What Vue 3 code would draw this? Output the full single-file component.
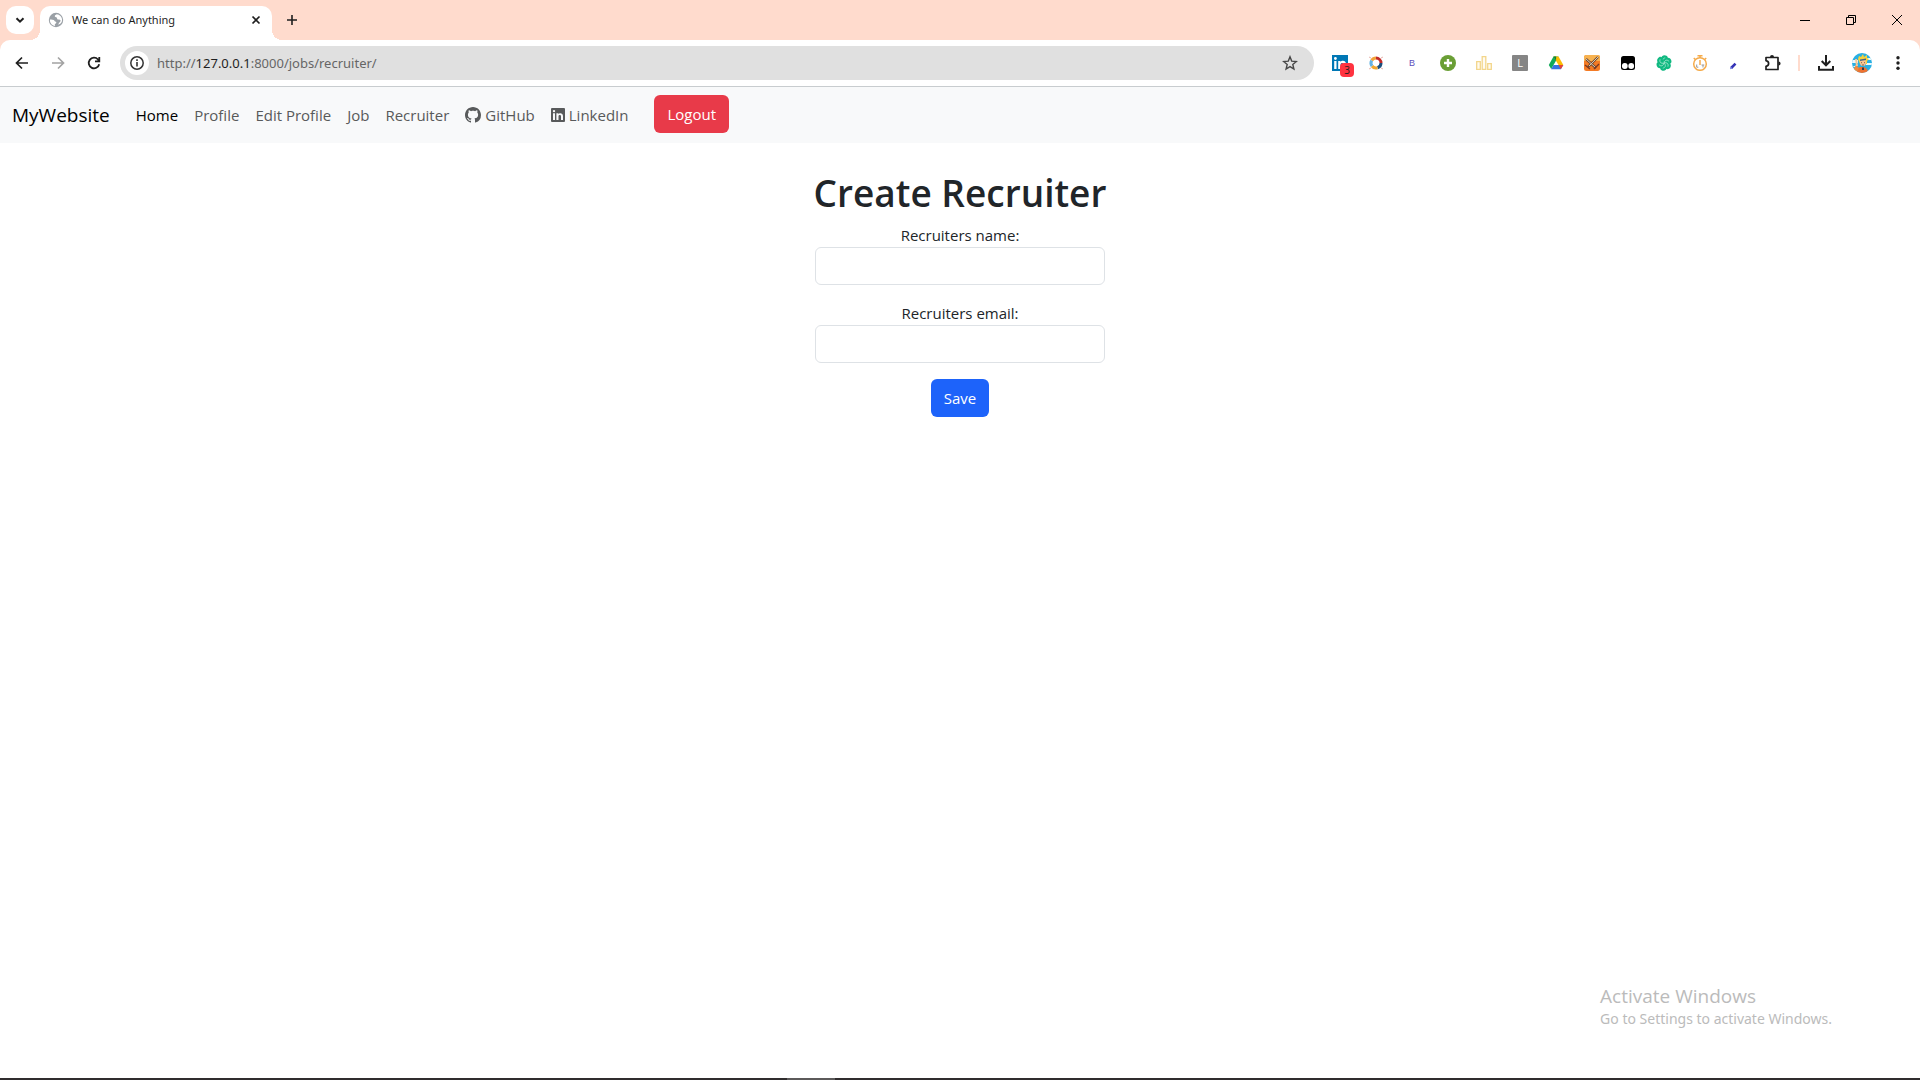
<script setup>
import { ref } from 'vue'

const url = ref('')
const name = ref('')
const email = ref('')
const links = ['Profile', 'Edit Profile', 'Job', 'Recruiter']
const petals = [0, 60, 120, 180, 240, 300]
</script>

<template>
  <div class="screen">
    <header class="browser">
      <div class="tabs">
        <button class="tab-search" aria-label="Search tabs">
          <svg width="12" height="12" viewBox="0 0 12 12"><path d="M2.5 4.2 6 7.7l3.5-3.5" fill="none" stroke="#1f1f1f" stroke-width="2" /></svg>
        </button>
        <div class="tab">
          <svg width="16" height="16" viewBox="0 0 16 16">
            <circle cx="8" cy="8" r="7.2" fill="#9aa0a6" />
            <path d="M8.7 2.2c-.9.7-1.9.9-1.9 2 0 .8 1.3.8 1.9 1.4.6.6.1 1.6 1 1.9 1 .3 2-.1 2.6.6.7.8-.1 1.9-.9 2.4-.7.5-.6 1.7-1.5 2.3 2.9-.7 4.2-2.9 4.2-4.9 0-3-2.3-5.4-5.4-5.7zM1.9 7.5c1.3-.2 2.8-.1 3.8.5.9.5.7 1.2 1.5 1.4.9.2 1.4.6 1 1.5-.4.8-1.4.7-1.4 1.7 0 .5.2 1 .4 1.4C4.1 13.5 1.7 11 1.9 7.5z" fill="#fff" />
          </svg>
          <span class="tab-title">We can do Anything</span>
          <button class="plain" aria-label="Close tab">
            <svg width="10" height="10" viewBox="0 0 10 10"><path d="m1.5 1.5 7 7m0-7-7 7" stroke="#1f1f1f" stroke-width="1.7" /></svg>
          </button>
        </div>
        <button class="plain new-tab" aria-label="New tab">
          <svg width="12" height="12" viewBox="0 0 12 12"><path d="M6 1v10M1 6h10" stroke="#1f1f1f" stroke-width="1.6" /></svg>
        </button>
        <div class="window-controls">
          <button class="plain" aria-label="Minimize">
            <svg width="10" height="10" viewBox="0 0 10 10"><path d="M0 5.5h10" stroke="#000" /></svg>
          </button>
          <button class="plain" aria-label="Restore">
            <svg width="10" height="10" viewBox="0 0 10 10"><path d="M.5 2.5h7v7h-7zM2.5 2.5v-2h7v7h-2" fill="none" stroke="#000" /></svg>
          </button>
          <button class="plain" aria-label="Close">
            <svg width="10" height="10" viewBox="0 0 10 10"><path d="m0 0 10 10M10 0 0 10" stroke="#000" /></svg>
          </button>
        </div>
      </div>

      <div class="toolbar">
        <div class="cells">
          <button class="cell" aria-label="Back">
            <svg width="16" height="16" viewBox="0 0 16 16"><path d="M14 8H3m5-5.5L2.5 8 8 13.5" fill="none" stroke="#1f1f1f" stroke-width="1.7" /></svg>
          </button>
          <button class="cell" aria-label="Forward">
            <svg width="16" height="16" viewBox="0 0 16 16"><path d="M2 8h11M8 2.5 13.5 8 8 13.5" fill="none" stroke="#a3a3a3" stroke-width="1.7" /></svg>
          </button>
          <button class="cell" aria-label="Reload">
            <svg width="16" height="16" viewBox="0 0 16 16"><path d="M13.2 9.2A5.3 5.3 0 1 1 12 4.5l1 1.2M13.3 2v4.3H9" fill="none" stroke="#1f1f1f" stroke-width="1.8" /></svg>
          </button>
        </div>
        <div class="omnibox">
          <button class="info" aria-label="View site information">
            <svg width="16" height="16" viewBox="0 0 16 16"><circle cx="8" cy="8" r="6.2" fill="none" stroke="#333" stroke-width="1.5" /><path d="M8 7v4.5M8 4.3v1.6" stroke="#333" stroke-width="1.6" /></svg>
          </button>
          <label class="address">
            <span>http://<b>127.0.0.1</b>:8000/jobs/recruiter/</span>
            <input v-model="url" aria-label="Address and search bar" />
          </label>
          <button class="plain" aria-label="Bookmark this tab">
            <svg width="16" height="16" viewBox="0 0 16 16"><path d="m8 1.8 1.7 4.3 4.7.4-3.6 3 1.1 4.5L8 11.6 4.1 14l1.1-4.5-3.6-3 4.7-.4z" fill="none" stroke="#474747" stroke-width="1.4" /></svg>
          </button>
        </div>
        <div class="cells">
          <button class="cell linkedin-ext" aria-label="LinkedIn extension">
            <svg width="16" height="16" viewBox="0 0 16 16"><path fill="#0077b5" d="M0 0h16v16H0z" /><path d="M2.2 6h2.3v8H2.2zM6.2 6h2.3v1.2C9.3 5.3 14 5 14 9v5h-2.4V9.5c0-2-3-2-3 0V14H6.2z" fill="#fff" /><circle cx="3.4" cy="3.5" r="1.4" fill="#fff" /></svg>
            <span class="badge">3</span>
          </button>
          <button class="cell" aria-label="Color ring">
            <svg width="16" height="16" viewBox="0 0 16 16" fill="none" stroke-width="3">
              <path d="M3.7 5.5A5 5 0 0 1 8 3" stroke="#f2a33a" /><path d="M8 3a5 5 0 0 1 5 5" stroke="#c22b29" /><path d="M13 8a5 5 0 0 1-3.5 4.8" stroke="#1b4f7d" /><path d="M9.5 12.8A5 5 0 0 1 4 11" stroke="#f0a72f" /><path d="M4 11a5 5 0 0 1-.3-5.5" stroke="#66b3e3" />
              <path d="m1 2 2 1M15 2l-2 1M1 14l2-1m12 1-2-1" stroke="#e8b4ac" stroke-width="1" />
            </svg>
          </button>
          <button class="cell letter-b" aria-label="B extension">B</button>
          <button class="cell" aria-label="Add">
            <svg width="16" height="16" viewBox="0 0 16 16"><circle cx="8" cy="8" r="8" fill="#6a9f35" /><path d="M8 4v8M4 8h8" stroke="#fff" stroke-width="2.4" /></svg>
          </button>
          <button class="cell" aria-label="Ranking">
            <svg width="16" height="16" viewBox="0 0 16 16"><path d="M.7 6.7h3.6v7.6H.7zM6.2 1.7h3.6v12.6H6.2zM11.7 8.7h3.6v5.6h-3.6z" fill="#fffaf0" stroke="#f3d68b" stroke-width="1.3" /></svg>
          </button>
          <button class="cell" aria-label="L extension"><span class="letter-l">L</span></button>
          <button class="cell" aria-label="Drive">
            <svg width="16" height="16" viewBox="0 0 16 16"><path d="M5.5 1.5h5L8 5.8 3.2 14 .8 10z" fill="#0fa958" /><path d="M5.5 1.5h5l4.8 8.5h-4.8z" fill="#fbbc04" /><path d="M5.5 1.5h2.7L8 5.8z" fill="#087f3d" /><path d="M5.5 10h9.8l-2.5 4.3H3.1z" fill="#3474e0" /><path d="M10.6 10h4.7l-2.5 4.3z" fill="#e94335" /></svg>
          </button>
          <button class="cell" aria-label="Swords">
            <svg width="16" height="16" viewBox="0 0 16 16"><rect width="16" height="16" rx="2.5" fill="#f47b25" /><path d="M2 0h12a2 2 0 0 1 2 2v4H0V2a2 2 0 0 1 2-2z" fill="#f7b250" /><path d="m2 4 10 9M14 2 4 12" stroke="#6e4a36" stroke-width="2.4" /><path d="m2 4 9 8M14 2l-9 9" stroke="#d9c9b4" stroke-width="1" /><path d="m1 10 5 4m9-5-5 5" stroke="#7b3820" stroke-width="1.4" /></svg>
          </button>
          <button class="cell" aria-label="Script manager">
            <svg width="16" height="16" viewBox="0 0 16 16"><rect x="1" y="1" width="14" height="14" rx="2.5" fill="#000" /><circle cx="4.8" cy="11" r="2.9" fill="#fff" /><circle cx="11.2" cy="11" r="2.9" fill="#fff" /></svg>
          </button>
          <button class="cell" aria-label="Chat assistant">
            <svg width="16" height="16" viewBox="0 0 16 16"><circle cx="8" cy="8" r="5" fill="#10b981" /><g v-for="a in petals" :key="a" :transform="`rotate(${a} 8 8)`"><path d="M5 4C5 1 8-.6 10.5.8 12.5 2 12 4 10.5 5L8 8z" fill="#10b981" /><path d="M8 8C5.8 6 6.2 3.5 9.2 2.8" fill="none" stroke="#b5eed8" stroke-width=".7" /></g></svg>
          </button>
          <button class="cell" aria-label="Timer">
            <svg width="16" height="16" viewBox="0 0 16 16"><g fill="none" stroke="#f5ab4b" stroke-width="1.5"><circle cx="8" cy="9" r="6.3" /><path d="M5.5.8h5M8 1v2M1.8 3l1.5 1.5M14.2 3l-1.5 1.5M8 5v5" /></g><path d="M4.7 9.5v2.7h1.6M9.5 10h2.8M11 10v2.5" fill="none" stroke="#999" /></svg>
          </button>
          <button class="cell" aria-label="Pen">
            <svg width="16" height="16" viewBox="0 0 16 16"><path d="m3.2 13 4.3-4.3" stroke="#3432b5" stroke-width="2.6" /><path d="m2 14.3.6-2.8 2.3 2.1z" fill="#7380e0" /></svg>
          </button>
          <button class="cell" aria-label="Extensions">
            <svg width="18" height="18" viewBox="0 0 18 18"><path d="M3 3.5h12v12H3v-3.2c3.5-.5 3.5-5.1 0-5.6z" fill="none" stroke="#1f1f1f" stroke-width="1.7" stroke-linejoin="round" /><path d="M7 3a2 2 0 0 1 4 0zM15.5 7.4a2.1 2.1 0 0 1 0 4.2z" fill="#1f1f1f" /></svg>
          </button>
          <i class="separator"></i>
          <button class="cell" aria-label="Downloads">
            <svg width="18" height="18" viewBox="0 0 18 18"><path d="M9 1v10M4.7 7 9 11.3 13.3 7M2 12v3.8h14V12" fill="none" stroke="#1f1f1f" stroke-width="2" /></svg>
          </button>
          <button class="cell" aria-label="User profile">
            <svg width="20" height="20" viewBox="0 0 20 20"><defs><clipPath id="face"><circle cx="10" cy="10" r="10" /></clipPath></defs><g clip-path="url(#face)"><path fill="#28afe3" d="M0 0h20v20H0z" /><path d="M0 7h6v3H0zm14-2h6v2h-6zm0 5h6v2h-6zM0 14l5-2v2z" fill="#e9f8fd" /><path d="M5 20c0-5 2-6 5-6s6 1 6 6z" fill="#ee7332" /><path d="m4 12 3 3-2 4-4-2z" fill="#f08a3d" /><path d="m6 6 1-3 2 1 2-3 1 3 3-2v3l2 1-2 2v3H8z" fill="#f6d23c" /><ellipse cx="11" cy="9.5" rx="3" ry="3.5" fill="#f7c594" /><path d="M8 6.5 14 5.5V7L8 8z" fill="#466485" /><path d="M9.5 9.2v1m3-1v1M10 12h2" stroke="#56352b" stroke-width=".7" /><path d="m3 6 2 0 1 7H4z" fill="#f7c594" /><path d="m10 14 1 1 1-1v3h-2z" fill="#323b4a" /></g></svg>
          </button>
          <button class="cell" aria-label="Menu">
            <svg width="16" height="16" viewBox="0 0 16 16" fill="#1f1f1f"><circle cx="8" cy="2.7" r="1.7" /><circle cx="8" cy="8" r="1.7" /><circle cx="8" cy="13.3" r="1.7" /></svg>
          </button>
        </div>
      </div>
    </header>

    <nav class="navbar">
      <a class="brand" href="#">MyWebsite</a>
      <a class="active" href="#">Home</a>
      <a v-for="link in links" :key="link" href="#">{{ link }}</a>
      <a href="#">
        <svg width="16" height="16" viewBox="0 0 16 16" fill="currentColor"><path d="M8 0C3.58 0 0 3.58 0 8c0 3.54 2.29 6.53 5.47 7.59.4.07.55-.17.55-.38 0-.19-.01-.82-.01-1.49-2.01.37-2.53-.49-2.69-.94-.09-.23-.48-.94-.82-1.13-.28-.15-.68-.52-.01-.53.63-.01 1.08.58 1.23.82.72 1.21 1.87.87 2.33.66.07-.52.28-.87.51-1.07-1.78-.2-3.64-.89-3.64-3.95 0-.87.31-1.59.82-2.15-.08-.2-.36-1.02.08-2.12 0 0 .67-.21 2.2.82.64-.18 1.32-.27 2-.27s1.36.09 2 .27c1.53-1.04 2.2-.82 2.2-.82.44 1.1.16 1.92.08 2.12.51.56.82 1.27.82 2.15 0 3.07-1.87 3.75-3.65 3.95.29.25.54.73.54 1.48 0 1.07-.01 1.93-.01 2.2 0 .21.15.46.55.38A8.01 8.01 0 0 0 16 8c0-4.42-3.58-8-8-8" /></svg>
        GitHub
      </a>
      <a href="#">
        <svg width="14" height="14" viewBox="0 0 14 14"><rect width="14" height="14" rx="1" fill="currentColor" /><path d="M2 5.3h2V12H2zM5.4 5.3h2v.9c.9-1.6 4.6-1.5 4.6 1.7V12h-2V8.4c0-1.9-2.5-1.8-2.5 0V12H5.4z" fill="#f8f9fa" /><circle cx="3" cy="3.1" r="1.2" fill="#f8f9fa" /></svg>
        LinkedIn
      </a>
      <button class="btn logout">Logout</button>
    </nav>

    <main class="page">
      <form class="form" @submit.prevent>
        <h1>Create Recruiter</h1>
        <div class="field">
          <label for="recruiter-name">Recruiters name:</label>
          <input id="recruiter-name" v-model="name" type="text" />
        </div>
        <div class="field">
          <label for="recruiter-email">Recruiters email:</label>
          <input id="recruiter-email" v-model="email" type="email" />
        </div>
        <button class="btn save">Save</button>
      </form>
    </main>

    <aside class="watermark">
      <p class="watermark-title">Activate Windows</p>
      <p>Go to Settings to activate Windows.</p>
    </aside>
    <footer class="taskbar"><i></i></footer>
  </div>
</template>

<style>
body {
  margin: 0;
}
</style>

<style scoped>
* {
  box-sizing: border-box;
}
.screen {
  display: flex;
  flex-direction: column;
  min-height: 100vh;
  position: relative;
  background: #fff;
  color: #212529;
  font: 15px/24px "Open Sans", "Noto Sans", sans-serif;
}
button,
input {
  font: inherit;
}
svg {
  display: block;
  flex: none;
}
.plain,
.cell,
.info,
.tab-search {
  display: flex;
  align-items: center;
  justify-content: center;
  flex: none;
  padding: 0;
  border: 0;
  background: none;
}
.browser {
  background: #ffdbcd;
}
.tabs {
  display: flex;
  height: 40px;
  padding: 6px 0 0 6px;
}
.tab-search {
  width: 28px;
  height: 28px;
  border-radius: 10px;
  background: #fff;
}
.tab {
  position: relative;
  display: flex;
  align-items: center;
  gap: 8px;
  width: 232px;
  margin-left: 6px;
  padding: 0 11px 6px 8px;
  border-radius: 10px 10px 0 0;
  background: #fff;
}
.tab::before,
.tab::after {
  content: "";
  position: absolute;
  bottom: 0;
  width: 10px;
  height: 10px;
}
.tab::before {
  right: 100%;
  background: radial-gradient(circle at 0 0, transparent 10px, #fff 10px);
}
.tab::after {
  left: 100%;
  background: radial-gradient(circle at 100% 0, transparent 10px, #fff 10px);
}
.tab-title {
  flex: 1;
  font-family: "Noto Sans", sans-serif;
  font-size: 11px;
  line-height: 16px;
  color: #1f1f1f;
}
.new-tab {
  width: 28px;
  height: 28px;
  margin-left: 6px;
}
.window-controls {
  display: flex;
  gap: 36px;
  height: 28px;
  margin-left: auto;
  padding-right: 18px;
}
.toolbar {
  display: flex;
  align-items: center;
  height: 47px;
  padding: 0 4px;
  border-bottom: 1px solid #c8cccf;
  border-radius: 10px 10px 0 0;
  background: #fff;
}
.cells {
  display: flex;
  align-items: center;
}
.cell {
  width: 36px;
  height: 36px;
}
.omnibox {
  display: flex;
  flex: 1;
  align-items: center;
  height: 34px;
  margin: 0 8px;
  padding: 0 16px 0 5px;
  border-radius: 17px;
  background: #e0e0e0;
}
.info {
  width: 24px;
  height: 24px;
  border-radius: 12px;
  background: #fff;
}
.address {
  display: flex;
  flex: 1;
  margin-left: 8px;
  font-family: "Noto Sans", sans-serif;
  font-size: 13px;
  line-height: 20px;
  color: #666;
}
.address b {
  font-weight: 400;
  color: #1f1f1f;
}
.address input {
  flex: 1;
  min-width: 0;
  padding: 0;
  border: 0;
  outline: 0;
  background: none;
}
.linkedin-ext {
  position: relative;
}
.badge {
  position: absolute;
  right: 4px;
  bottom: 4px;
  width: 14px;
  height: 14px;
  border-radius: 4px;
  background: #ff3340;
  color: #1f1f1f;
  font-size: 10px;
  line-height: 14px;
}
.letter-b {
  color: #5b4ebc;
  font: 9px/12px "Liberation Sans", sans-serif;
}
.letter-l {
  width: 16px;
  height: 16px;
  border-radius: 1px;
  background: #858585;
  color: #fff;
  font-size: 11px;
  line-height: 16px;
}
.separator {
  width: 2px;
  height: 16px;
  margin: 0 8px;
  background: #ffdbcd;
}
.navbar {
  display: flex;
  align-items: center;
  height: 56px;
  padding: 8px 12px;
  background: #f8f9fa;
}
.navbar a {
  display: flex;
  align-items: center;
  gap: 4px;
  padding: 0 8px;
  color: #585a5b;
  text-decoration: none;
}
.navbar .brand {
  margin-right: 18px;
  padding: 0;
  color: #000;
  font-size: 19px;
}
.navbar .active {
  color: #000;
}
.btn {
  height: 38px;
  padding: 0 13px;
  border: 0;
  border-radius: 6px;
  color: #fff;
}
.logout {
  align-self: flex-start;
  margin-left: 18px;
  background: #e83a49;
}
.page {
  flex: 1;
  padding-top: 24px;
}
.form {
  display: flex;
  flex-direction: column;
  align-items: center;
  gap: 16px;
  width: 290px;
  margin: 0 auto;
}
h1 {
  margin: 0 0 -12px;
  font-size: 37px;
  font-weight: 600;
  line-height: 52px;
  white-space: nowrap;
}
.field {
  display: flex;
  flex-direction: column;
  width: 100%;
  text-align: center;
}
.field input {
  height: 38px;
  padding: 6px 12px;
  border: 1px solid #dee2e6;
  border-radius: 6px;
  background: #fff;
}
.save {
  background: #1d63fa;
}
.watermark {
  position: absolute;
  right: 88px;
  bottom: 51px;
  color: #bbb;
}
.watermark p {
  margin: 0;
  font-family: "Noto Sans", sans-serif;
  font-size: 14px;
  line-height: 20px;
}
.watermark .watermark-title {
  font-family: "Open Sans", sans-serif;
  font-size: 19px;
  line-height: 26px;
}
.taskbar {
  display: flex;
  height: 2px;
  padding-left: 41%;
  background: #302d2e;
}
.taskbar i {
  width: 48px;
  background: #5c5a5a;
}
</style>
